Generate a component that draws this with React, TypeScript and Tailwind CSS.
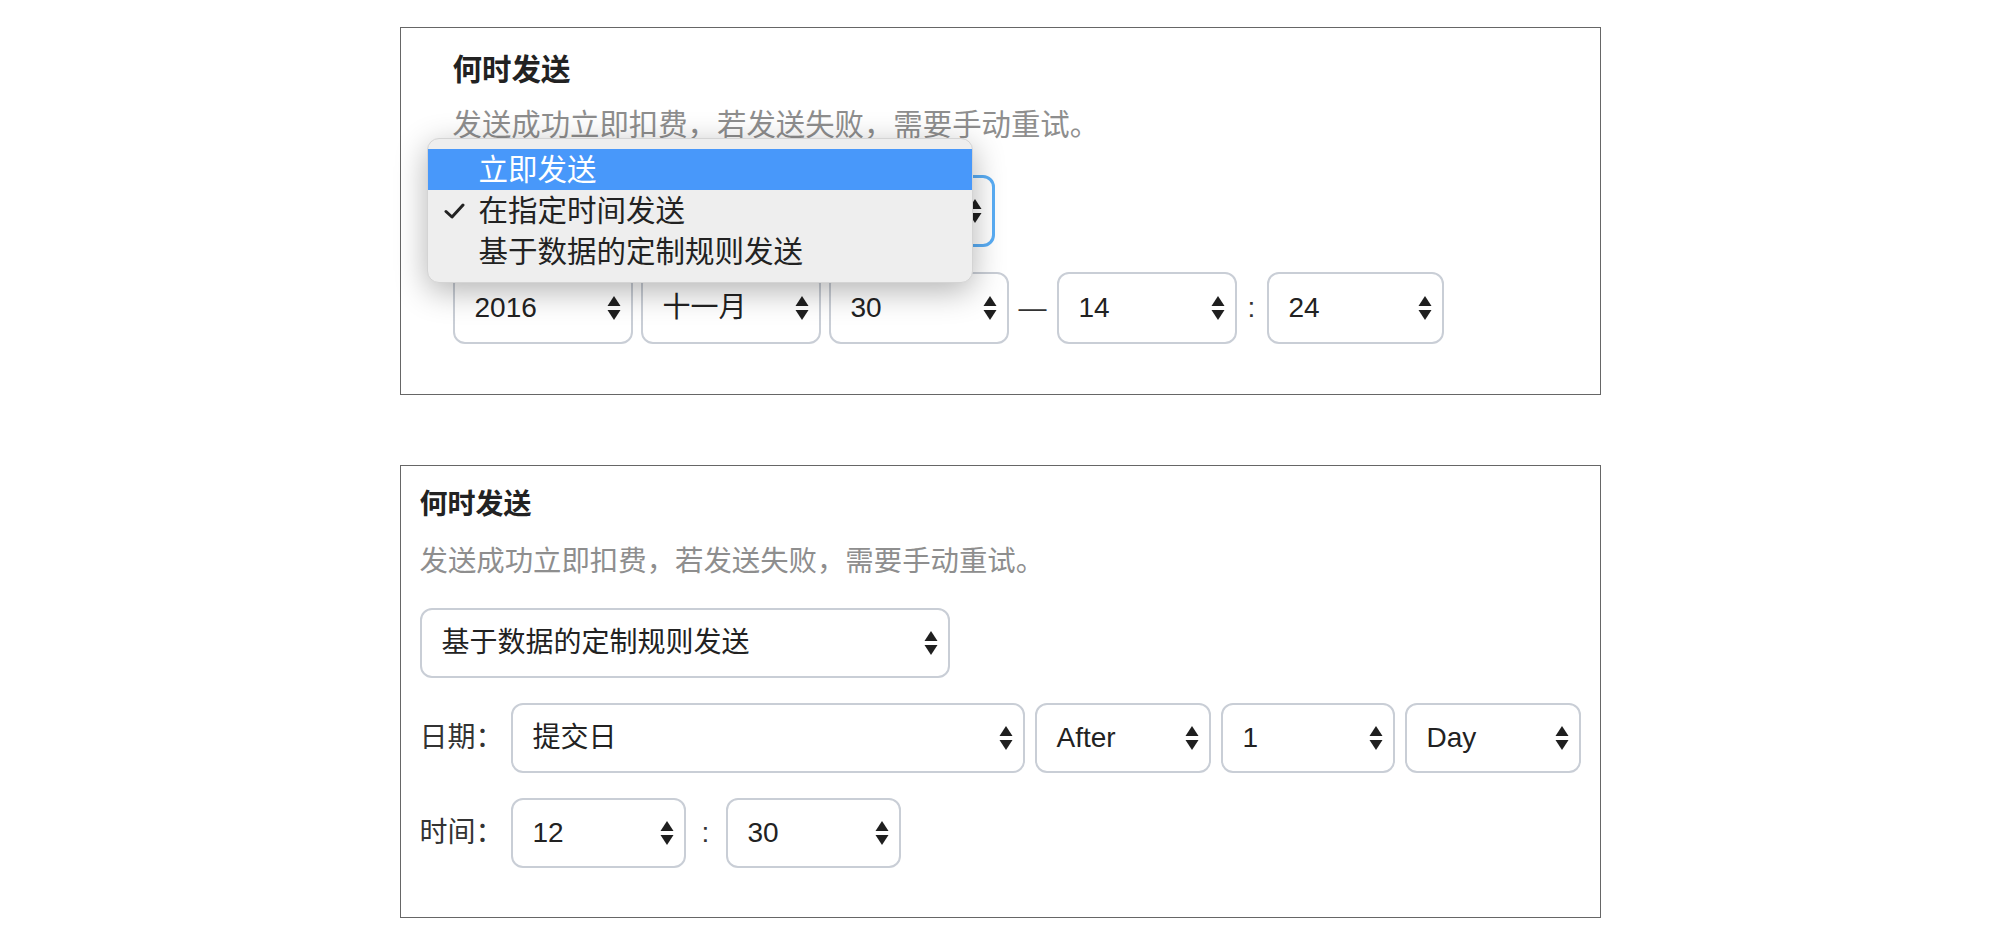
import React from 'react'

const font = '"Liberation Sans", "Noto Sans CJK SC", sans-serif'

// 上下箭头
function Arrows() {
  return (
    <svg width="14" height="26" viewBox="0 0 14 26" className="shrink-0">
      <path d="M7 1 L13.5 11 L0.5 11 Z" fill="#1f1f1f" />
      <path d="M0.5 15 L13.5 15 L7 25 Z" fill="#1f1f1f" />
    </svg>
  )
}

function Select({
  value,
  className = '',
  focused = false,
}: {
  value: string
  className?: string
  focused?: boolean
}) {
  return (
    <div
      className={`flex items-center justify-between rounded-[12px] bg-white pl-[20px] pr-[10px] text-[28px] leading-[40px] text-[#222] ${
        focused ? 'border-[3px] border-[#5aaef6]' : 'border-2 border-[#c9ced6]'
      } ${className}`}
    >
      <span className="whitespace-nowrap">{value}</span>
      <Arrows />
    </div>
  )
}

export default function App() {
  return (
    <div className="min-h-screen bg-white pt-[27px]" style={{ fontFamily: font }}>
      {/* 第一个：下拉菜单展开 */}
      <div className="relative mx-auto w-[1201px] border border-[#666] pl-[52px] pt-[22px] pb-[50px]">
        <div className="text-[29.5px] font-bold leading-[40px] text-[#222]">何时发送</div>
        <div className="mt-[15px] text-[29.4px] leading-[40px] text-[#8e8e8e]">
          发送成功立即扣费，若发送失败，需要手动重试。
        </div>

        <Select value="在指定时间发送" focused className="mt-[30px] h-[72px] w-[542px]" />

        <div className="mt-[25px] flex items-center">
          <Select value="2016" className="h-[72px] w-[180px]" />
          <Select value="十一月" className="ml-[8px] h-[72px] w-[180px]" />
          <Select value="30" className="ml-[8px] h-[72px] w-[180px]" />
          <div className="w-[48px] text-center text-[28px] leading-[40px] text-[#333]">—</div>
          <Select value="14" className="h-[72px] w-[180px]" />
          <div className="w-[30px] text-center text-[28px] leading-[40px] text-[#333]">:</div>
          <Select value="24" className="h-[72px] w-[177px]" />
        </div>

        {/* 下拉菜单 */}
        <div className="absolute left-[26px] top-[110px] w-[546px] rounded-[12px] border border-[#d4d4d4] bg-[#eeeeee] py-[10px] text-[29.5px] leading-[40px] shadow-[0_8px_32px_rgba(0,0,0,0.3)]">
          <div className="flex h-[41px] items-center bg-[#4898fa] pl-[51px] text-white">立即发送</div>
          <div className="relative flex h-[41px] items-center pl-[51px] text-[#222]">
            <svg
              width="21"
              height="16"
              viewBox="0 0 21 16"
              className="absolute left-[16px] top-[13px]"
            >
              <path d="M2 8.5 L8 14 L19 2" fill="none" stroke="#222" strokeWidth="3" strokeLinecap="round" strokeLinejoin="round" />
            </svg>
            在指定时间发送
          </div>
          <div className="flex h-[41px] items-center pl-[51px] text-[#222]">基于数据的定制规则发送</div>
        </div>
      </div>

      {/* 第二个：基于数据的规则 */}
      <div className="mx-auto mt-[70px] w-[1201px] border border-[#666] px-[19px] pt-[19px] pb-[49px]">
        <div className="text-[28px] font-bold leading-[40px] text-[#222]">何时发送</div>
        <div className="mt-[16px] text-[28.4px] leading-[40px] text-[#8e8e8e]">
          发送成功立即扣费，若发送失败，需要手动重试。
        </div>

        <Select value="基于数据的定制规则发送" className="mt-[27px] h-[70px] w-[530px]" />

        <div className="mt-[25px] flex items-center">
          <div className="w-[91px] shrink-0 text-[28px] leading-[40px] text-[#333]">日期：</div>
          <Select value="提交日" className="h-[70px] flex-1" />
          <Select value="After" className="ml-[10px] h-[70px] w-[176px]" />
          <Select value="1" className="ml-[10px] h-[70px] w-[174px]" />
          <Select value="Day" className="ml-[10px] h-[70px] w-[176px]" />
        </div>

        <div className="mt-[25px] flex items-center">
          <div className="w-[91px] shrink-0 text-[28px] leading-[40px] text-[#333]">时间：</div>
          <Select value="12" className="h-[70px] w-[175px]" />
          <div className="w-[40px] text-center text-[28px] leading-[40px] text-[#333]">:</div>
          <Select value="30" className="h-[70px] w-[175px]" />
        </div>
      </div>
    </div>
  )
}
